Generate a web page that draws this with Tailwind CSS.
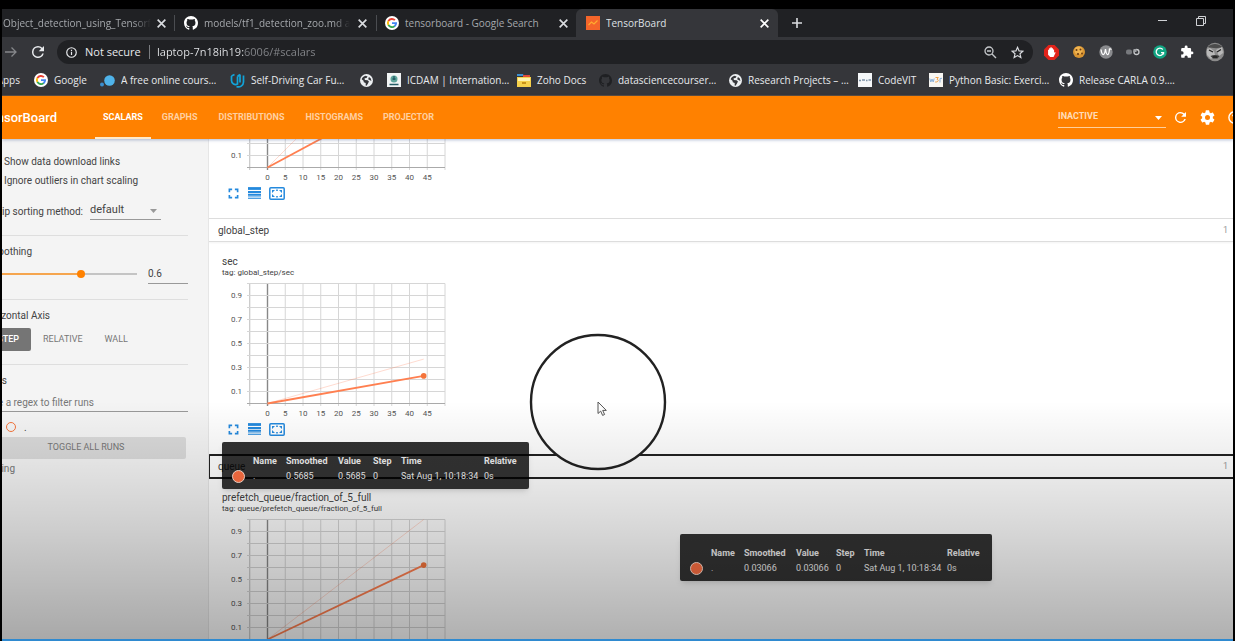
<!DOCTYPE html>
<html lang="en">
<head>
<meta charset="utf-8">
<title>TensorBoard</title>
<script src="https://cdn.jsdelivr.net/npm/@tailwindcss/browser@4"></script>
</head>
<body class="relative flex h-screen flex-col overflow-hidden border-x-2 border-t-9 border-black bg-black font-['Roboto',sans-serif] text-[10px]">

<svg class="hidden" aria-hidden="true">
  <symbol id="github" viewBox="0 0 16 16"><path fill="currentColor" d="M8 0C3.58 0 0 3.58 0 8c0 3.54 2.29 6.53 5.47 7.59.4.07.55-.17.55-.38 0-.19-.01-.82-.01-1.49-2.01.37-2.53-.49-2.69-.94-.09-.23-.48-.94-.82-1.13-.28-.15-.68-.52-.01-.53.63-.01 1.08.58 1.23.82.72 1.21 1.87.87 2.33.66.07-.52.28-.87.51-1.07-1.78-.2-3.64-.89-3.64-3.95 0-.87.31-1.59.82-2.15-.08-.2-.36-1.02.08-2.12 0 0 .67-.21 2.2.82a7.6 7.6 0 0 1 4 0c1.53-1.04 2.2-.82 2.2-.82.44 1.1.16 1.92.08 2.12.51.56.82 1.27.82 2.15 0 3.07-1.87 3.75-3.65 3.95.29.25.54.73.54 1.48 0 1.07-.01 1.93-.01 2.2 0 .21.15.46.55.38A8 8 0 0 0 16 8c0-4.42-3.58-8-8-8z"/></symbol>
  <symbol id="google" viewBox="0 0 24 24"><circle cx="12" cy="12" r="12" fill="#fff"/><g fill="none" stroke-width="3.2"><path stroke="#ea4335" d="M17 7.2A7 7 0 0 0 5.8 8.8"/><path stroke="#fbbc05" d="M5.8 8.6a7 7 0 0 0 0 6.8"/><path stroke="#34a853" d="M5.8 15.2A7 7 0 0 0 16.6 17.300"/><path stroke="#4285f4" d="M16.400 17.500A7 7 0 0 0 19 12.200H12"/></g></symbol>
  <symbol id="globe" viewBox="0 0 24 24"><circle cx="12" cy="12" r="12" fill="#eceff1"/><path fill="#35363a" d="M3 9.500C4 6 7 3.500 10.500 3L14 4.500 12 7.500 8.500 8 9 11 14 11.500 16.500 14 14.500 18 12 21.500 10.500 21 10.500 16.500 7 15 6.500 12.500zM16.500 5.500 20 8.500 21 13 18.500 11.500 15 9.500z"/></symbol>
  <symbol id="close" viewBox="0 0 10 10"><path d="M1.500 1.500 8.500 8.500M8.500 1.500 1.500 8.500" stroke="currentColor" stroke-width="1.500"/></symbol>
  <symbol id="reload" viewBox="4 4 16 16"><path fill="currentColor" d="M17.65 6.350A7.950 7.950 0 0 0 12 4a8 8 0 1 0 7.730 10h-2.080A6 6 0 1 1 12 6c1.660 0 3.140.69 4.220 1.780L13 11h7V4z"/></symbol>
  <symbol id="expand" viewBox="0 0 12 12"><path fill="none" stroke="currentColor" stroke-width="1.800" d="M1.500 4.500v-3h3M7.500 1.500h3v3M10.500 7.500v3h-3M4.500 10.500h-3v-3"/></symbol>
  <symbol id="lines" viewBox="0 0 13 12"><path stroke="currentColor" stroke-width="2.800" d="M0 1.500h13"/><path stroke="currentColor" stroke-width="2" d="M0 4.900h13M0 7.800h13"/><path stroke="currentColor" stroke-width="1" d="M0 9.900h13M0 11.500h13" opacity=".8"/></symbol>
  <symbol id="fit" viewBox="0 0 16 13"><rect x=".8" y=".8" width="14.400" height="11.400" rx="1" fill="none" stroke="currentColor" stroke-width="1.500"/><path fill="currentColor" d="M3 3h3L3 6zM13 3v3l-3-3zM3 10V7l3 3zM13 10h-3l3-3zM7.200 2.500h1.600v1.500H7.200zM7.200 9h1.600v1.500H7.200z"/></symbol>
</svg>

<div class="flex min-h-0 flex-1 flex-col overflow-hidden bg-white">

<header class="shrink-0 bg-[#35363a] font-['Open_Sans',sans-serif] text-[10px] text-[#e8eaed]">
  <nav class="flex h-7 items-center bg-[#202124] text-[#a5a8ac]" aria-label="Tabs">
    <div class="flex h-4 w-[173px] shrink-0 items-center border-r border-[#4b4d51] pl-px">
      <span class="w-[148px] overflow-hidden whitespace-nowrap [mask-image:linear-gradient(to_right,black_130px,transparent)]">Object_detection_using_Tensorflow</span>
      <button class="ml-[5px] text-[#dadce0]" aria-label="Close tab"><svg class="size-[11px]"><use href="#close"/></svg></button>
    </div>
    <div class="flex h-4 w-[202px] shrink-0 items-center border-r border-[#4b4d51] pl-[9px]">
      <svg class="mr-1.5 size-[14px] shrink-0 text-white"><use href="#github"/></svg>
      <span class="w-[146px] overflow-hidden whitespace-nowrap [mask-image:linear-gradient(to_right,black_130px,transparent)]">models/tf1_detection_zoo.md at master</span>
      <button class="ml-[7px] text-[#dadce0]" aria-label="Close tab"><svg class="size-[11px]"><use href="#close"/></svg></button>
    </div>
    <div class="flex h-4 w-[199px] shrink-0 items-center pl-2">
      <svg class="mr-1.5 size-[14px] shrink-0"><use href="#google"/></svg>
      <span class="w-[146px] overflow-hidden whitespace-nowrap">tensorboard - Google Search</span>
      <button class="ml-[7px] text-[#dadce0]" aria-label="Close tab"><svg class="size-[11px]"><use href="#close"/></svg></button>
    </div>
    <div class="flex h-full w-[202px] shrink-0 items-center rounded-t-md bg-[#35363a] pl-[10px] text-[#dfe1e5]">
      <svg class="mr-[6px] size-[14px] shrink-0" viewBox="0 0 14 14"><path fill="#f4652a" d="M0 0h14v14H0z"/><path d="m2.500 9 3-3 2.500 2L11.500 4.500" fill="none" stroke="#ffab2e" stroke-width="1.200"/></svg>
      <span class="w-[146px] overflow-hidden whitespace-nowrap">TensorBoard</span>
      <button class="ml-[7px] text-white" aria-label="Close tab"><svg class="size-[11px]"><use href="#close"/></svg></button>
    </div>
    <button class="ml-[13px]" aria-label="New tab"><svg class="size-3" viewBox="0 0 12 12"><path d="M6 1v10M1 6h10" stroke="#dadce0" stroke-width="1.600"/></svg></button>
    <button class="mr-[28px] mb-1 ml-auto" aria-label="Minimize"><svg class="size-[10px]" viewBox="0 0 10 10"><path d="M0 4.500h9" stroke="#d0d2d5"/></svg></button>
    <button class="mr-[27px] mb-1" aria-label="Restore"><svg class="size-[10px]" viewBox="0 0 10 10"><path d="M.5 2.500h7v7h-7zM2.500 2.500v-2h7v7h-2" fill="none" stroke="#d0d2d5"/></svg></button>
  </nav>

  <div class="flex h-[30px] items-center">
    <button class="ml-[3px] text-[#85878a]" aria-label="Forward"><svg class="size-3" viewBox="0 0 12 12"><path d="M0 6h11M6.500 1.500 11 6l-4.500 4.500" fill="none" stroke="currentColor" stroke-width="1.300"/></svg></button>
    <button class="ml-[15px]" aria-label="Reload"><svg class="size-3"><use href="#reload"/></svg></button>
    <div class="mr-[11px] ml-[13px] flex h-6 flex-1 items-center rounded-full bg-[#202124] px-[9px] text-[11px]">
      <svg class="size-[11px]" viewBox="0 0 12 12"><circle cx="6" cy="6" r="5.200" fill="none" stroke="currentColor" stroke-width="1.300"/><path d="M6 5.200v3.500M6 3v1.300" stroke="currentColor" stroke-width="1.300"/></svg>
      <span class="ml-2 w-[64px] whitespace-nowrap">Not secure</span>
      <span class="h-3.5 w-px bg-[#7a7c80]"></span>
      <input class="ml-[7px] min-w-0 flex-1 bg-linear-to-r from-[#e8eaed] from-[87px] to-[#85878b] to-[87px] bg-clip-text text-transparent outline-none" aria-label="Address" value="laptop-7n18ih19:6006/#scalars">
      <button aria-label="Zoom"><svg class="size-[13px]" viewBox="0 0 13 13"><circle cx="5" cy="5" r="4" fill="none" stroke="#c4c7ca" stroke-width="1.300"/><path d="M3 5h4M8 8l4 4" stroke="#c4c7ca" stroke-width="1.400"/></svg></button>
      <button class="ml-[14px]" aria-label="Bookmark"><svg class="size-[13px]" viewBox="0 0 24 24"><path d="m12 2.500 2.900 6.500 7 .7-5.300 4.700 1.600 7L12 17.700l-6.200 3.700 1.600-7L2.100 9.700l7-.7z" fill="none" stroke="#dadce0" stroke-width="2.200"/></svg></button>
    </div>
    <div class="mr-2 flex items-center gap-[13px]">
      <button aria-label="Ad blocker"><svg class="size-[15px]" viewBox="0 0 14 14"><path fill="#e2231a" d="M4.200 0h5.600L14 4.200v5.600L9.800 14H4.200L0 9.800V4.200z"/><path fill="#fff" d="M3.800 7V4.400h1V3h1.200v-.8h1.200V3h1.200v1.200h1v3l.9-.6.5.7L8.900 11.300H5.800L3.800 9z"/></svg></button>
      <button aria-label="Cookies"><svg class="size-[14px]" viewBox="0 0 14 14"><circle cx="7" cy="7" r="6" fill="#d99532"/><circle cx="6.500" cy="5.500" r="4" fill="#efb34f"/><g fill="#6d3c12"><circle cx="4.500" cy="5" r="1"/><circle cx="8.500" cy="4.500" r="1"/><circle cx="6" cy="9" r="1.100"/><circle cx="10" cy="8.500" r=".9"/></g></svg></button>
      <button aria-label="Web assistant"><svg class="size-[14px]" viewBox="0 0 14 14"><circle cx="7" cy="7" r="6.700" fill="#8a8b8e"/><path d="M2 4.500C3 11 5.500 11.500 6.500 4c1 7.500 3.500 7.500 4-.5M10.500 3.500l2 1" fill="none" stroke="#fff" stroke-width="1.300"/></svg></button>
      <button aria-label="Dark mode"><svg class="size-[14px]" viewBox="0 0 14 14"><rect x="0" y="4.500" width="6" height="5" rx="2" fill="#77797d"/><circle cx="10.500" cy="7" r="2.500" fill="none" stroke="#c8cacc" stroke-width="1.300"/><path d="M7.500 4h3v3h-3z" fill="#a0a2a5"/></svg></button>
      <button aria-label="Grammarly"><svg class="size-[14px]" viewBox="0 0 14 14"><circle cx="7" cy="7" r="6.800" fill="#11a683"/><path d="M9.800 4.500a3.700 3.700 0 1 0 .7 3.200H8M10.500 7.500v2" fill="none" stroke="#fff" stroke-width="1.300"/></svg></button>
      <button aria-label="Extensions"><svg class="size-[14px]" viewBox="0 0 24 24"><path fill="#fff" d="M20.500 11H19V7a2 2 0 0 0-2-2h-4V3.500a2.500 2.500 0 0 0-5 0V5H4a2 2 0 0 0-2 2v3.800h1.500a2.700 2.700 0 0 1 0 5.400H2V20a2 2 0 0 0 2 2h3.800v-1.500a2.700 2.700 0 0 1 5.400 0V22H17a2 2 0 0 0 2-2v-4h1.500a2.500 2.500 0 0 0 0-5z"/></svg></button>
      <button class="-ml-0.5" aria-label="Profile"><svg class="size-[20px]" viewBox="0 0 20 20"><circle cx="10" cy="10" r="9.200" fill="#8b8b8b"/><path fill="#b9b9b9" d="M2 7l3-1 4 3 1 4-4 4-4-4zM11 8l6-3 1 6-4 3z"/><path d="M3 4.500C7 1 13 1 17 4.500l-1 1-5 .8L4 5.500z" fill="#4b4b4b"/><path d="M5.500 14c3-1.500 6-1.500 9 0l-2 2.500H8z" fill="#3b3b3b"/><path d="M4 8l4 2M16 7.500 12 10M8 15h4" stroke="#222" stroke-width="1.300"/></svg></button>
    </div>
  </div>

  <nav class="flex h-[29px] items-center overflow-hidden border-b border-[#5b4a3a] pb-0.5 whitespace-nowrap" aria-label="Bookmarks">
    <a href="#" class="flex w-[18px] shrink-0 justify-end">Apps</a>
    <a href="#" class="ml-[14px] flex w-[66px] shrink-0 items-center gap-1.5"><svg class="size-[14px] shrink-0"><use href="#google"/></svg>Google</a>
    <a href="#" class="flex w-[130px] shrink-0 items-center gap-1.5 pr-2.5"><svg class="size-[15px] shrink-0" viewBox="0 0 15 15"><circle cx="9.500" cy="7.500" r="5.300" fill="#4fb3ea"/><circle cx="2" cy="11.500" r="2" fill="#3a8fd0"/></svg><span class="truncate">A free online courses list</span></a>
    <a href="#" class="flex w-[130px] shrink-0 items-center gap-1.5 pr-3"><svg class="size-[15px] shrink-0" viewBox="0 0 15 15"><path d="M1.500 3v4.500a4 4 0 0 0 6 3.500V3.500M4.500 1.500 1.500 3M7.500 3.500l2.500-2M10 1.500v8M13.500 2.500V9a5 5 0 0 1-7 4.500" fill="none" stroke="#12a4d9" stroke-width="1.700"/></svg><span class="truncate">Self-Driving Car Fundamentals</span></a>
    <a href="#" class="w-[27px] shrink-0" aria-label="Website"><svg class="size-[13px]"><use href="#globe"/></svg></a>
    <a href="#" class="flex w-[130px] shrink-0 items-center gap-1.5 pr-1.5"><svg class="size-[14px] shrink-0" viewBox="0 0 14 14"><path fill="#f2f5f5" d="M0 0h14v14H0z"/><circle cx="7" cy="6" r="3.500" fill="#5fa59b"/><path d="M5.500 6h3M7 3v4M2.500 11.500h9" stroke="#245c66" stroke-width="1.300"/></svg><span class="truncate">ICDAM | International Conference</span></a>
    <a href="#" class="flex w-[82px] shrink-0 items-center gap-1.5"><svg class="size-[14px] shrink-0" viewBox="0 0 14 14"><path fill="#3d8fd1" d="M0 1h6l1 2H0z"/><path fill="#e04b3a" d="M6 2h7v3H6z"/><path fill="#f6d14b" d="M0 4h14v10H0z"/><path fill="#fff3b0" d="M1 5h12v3H1z"/><path fill="#c99218" d="M5 9h4v2H5z"/></svg>Zoho Docs</a>
    <a href="#" class="flex w-[130px] shrink-0 items-center gap-1.5 pr-3"><svg class="size-[13px] shrink-0 text-[#1f2023]"><use href="#github"/></svg><span class="truncate">datasciencecoursera/notes</span></a>
    <a href="#" class="flex w-[129px] shrink-0 items-center gap-1.5 pr-1"><svg class="size-[13px] shrink-0"><use href="#globe"/></svg><span class="truncate">Research Projects – Home</span></a>
    <a href="#" class="flex w-[71px] shrink-0 items-center gap-1.5"><svg class="size-[14px] shrink-0" viewBox="0 0 14 14"><path fill="#f5f7f9" d="M0 0h14v14H0z"/><path d="M1 7.500h2M4 7h3M8 7.500h1.500M10.500 7H13" stroke="#7d93a8" stroke-width="1.500"/></svg>CodeVIT</a>
    <a href="#" class="flex w-[130px] shrink-0 items-center gap-1.5 pr-2"><svg class="size-[14px] shrink-0" viewBox="0 0 14 14"><path fill="#f8f6f2" d="M0 0h14v14H0z"/><path d="m.8 5.500 1 3.500 1.200-3 1.200 3 1-3.500M11 9.500v-4l2-.2" fill="none" stroke="#8bb0d8"/><path d="M6.500 4.500h2.800L8 6.300c2 .2 1.700 3-1.800 2.700" fill="none" stroke="#f0a04a"/></svg><span class="truncate">Python Basic: Exercises, Practice</span></a>
    <a href="#" class="flex w-[127px] shrink-0 items-center gap-1.5 pr-2"><svg class="size-[14px] shrink-0 text-white"><use href="#github"/></svg><span class="truncate">Release CARLA 0.9.10 notes</span></a>
  </nav>
</header>

<header class="z-10 flex h-[43px] shrink-0 items-center overflow-hidden bg-[#ff8100] font-medium text-white shadow-[0_1px_3px_rgba(60,90,150,0.4)]">
  <h1 class="flex w-[55px] shrink-0 justify-end text-[13px]">TensorBoard</h1>
  <nav class="ml-[38px] flex h-full text-[9px] font-bold text-[#ffd0a0]" aria-label="Dashboards">
    <a href="#scalars" class="flex items-center border-b-2 border-[#ffe9c9] px-2 pt-0.5 text-white">SCALARS</a>
    <a href="#graphs" class="ml-px flex items-center px-2.5">GRAPHS</a>
    <a href="#distributions" class="ml-px flex items-center px-2.5">DISTRIBUTIONS</a>
    <a href="#histograms" class="ml-px flex items-center px-2.5">HISTOGRAMS</a>
    <a href="#projector" class="flex items-center px-2.5">PROJECTOR</a>
  </nav>
  <div class="relative mr-[9px] ml-auto w-[108px]">
    <select class="block h-5 w-full appearance-none border-b border-[#ffcf9b] text-[9px] font-bold text-[#ffdcb8]" aria-label="Inactive dashboards"><option>INACTIVE</option></select>
    <svg class="pointer-events-none absolute top-2 right-1 h-1 w-[7px]" viewBox="0 0 7 4"><path fill="#fff" d="M0 0h7L3.500 4z"/></svg>
  </div>
  <button aria-label="Reload"><svg class="size-[11px]"><use href="#reload"/></svg></button>
  <button class="ml-[14px]" aria-label="Settings"><svg class="size-[15px]" viewBox="1.500 1.500 21 21"><path fill="#fff" d="M19.430 12.980c.04-.32.07-.64.07-.98s-.03-.66-.07-.98l2.110-1.650c.19-.15.24-.42.12-.64l-2-3.460c-.12-.22-.39-.3-.61-.22l-2.490 1c-.52-.4-1.080-.73-1.690-.98l-.38-2.650A.49.49 0 0 0 14 2h-4c-.25 0-.46.18-.49.42l-.38 2.650c-.61.25-1.170.59-1.690.98l-2.490-1c-.23-.09-.49 0-.61.22l-2 3.460c-.13.22-.07.49.12.64l2.110 1.650c-.04.32-.07.65-.07.98s.03.66.07.98l-2.110 1.650c-.19.15-.24.42-.12.64l2 3.460c.12.22.39.3.61.22l2.490-1c.52.4 1.080.73 1.690.98l.38 2.650c.03.24.24.42.49.42h4c.25 0 .46-.18.49-.42l.38-2.650c.61-.25 1.170-.59 1.690-.98l2.490 1c.23.09.49 0 .61-.22l2-3.460c.12-.22.07-.49-.12-.64zM12 15.500a3.500 3.500 0 1 1 0-7 3.500 3.500 0 0 1 0 7z"/></svg></button>
  <button class="-mr-[8px] ml-[13px]" aria-label="Help"><svg class="size-[13px]" viewBox="0 0 13 13"><circle cx="6.500" cy="6.500" r="5.600" fill="none" stroke="#fff" stroke-width="1.400"/><path d="M4.700 5.200a1.800 1.800 0 1 1 2.500 1.600q-.7.400-.7 1.200M6.500 9v1.200" fill="none" stroke="#fff" stroke-width="1.200"/></svg></button>
</header>

<div class="flex min-h-0 flex-1">
  <aside class="w-[207px] shrink-0 overflow-hidden border-r border-[#e6e6e6] bg-[#f4f4f4] pr-5 text-[#444]">
    <label class="mt-4 -ml-4 flex h-3 items-center gap-1.5 whitespace-nowrap"><input type="checkbox" class="size-3">Show data download links</label>
    <label class="mt-[7px] -ml-4 flex h-3 items-center gap-1.5 whitespace-nowrap"><input type="checkbox" checked class="size-3">Ignore outliers in chart scaling</label>
    <div class="mt-[14px] flex h-5 items-center">
      <label for="sort" class="flex w-[81px] shrink-0 justify-end pt-0.5 whitespace-nowrap">Tooltip sorting method:</label>
      <div class="relative ml-[7px] w-[71px]">
        <select id="sort" class="h-5 w-full appearance-none border-b border-[#999] pt-0.5 text-[11px]"><option>default</option></select>
        <svg class="pointer-events-none absolute top-[9px] right-1 h-1 w-[7px]" viewBox="0 0 7 4"><path fill="#999" d="M0 0h7L3.500 4z"/></svg>
      </div>
    </div>
    <hr class="mt-[15px] border-[#dedede]">
    <label for="smooth" class="mt-[9px] flex h-3 w-[30px] items-center justify-end">Smoothing</label>
    <div class="mt-[7px] flex h-5 items-center">
      <div class="flex w-[135px] shrink-0 justify-end">
        <input id="smooth" type="range" min="0" max="1" step="0.001" value="0.6" class="h-2 w-[137px] shrink-0 appearance-none bg-linear-to-r from-[#f5a54e] from-[59%] to-[#c4c4c4] to-[59%] bg-[length:100%_2px] bg-center bg-no-repeat [&::-webkit-slider-thumb]:size-2 [&::-webkit-slider-thumb]:appearance-none [&::-webkit-slider-thumb]:rounded-full [&::-webkit-slider-thumb]:bg-[#ff8100]">
      </div>
      <input class="ml-[11px] h-5 w-10 border-b border-[#999]" aria-label="Smoothing value" value="0.6">
    </div>
    <hr class="mt-[15px] border-[#dedede]">
    <h3 class="mt-[9px] flex h-3 w-[48px] items-center justify-end whitespace-nowrap">Horizontal Axis</h3>
    <div class="mt-[7px] flex h-[23px] items-center text-[9px] text-[#777]">
      <div class="flex w-[29px] shrink-0 justify-end"><button class="h-[23px] w-12 shrink-0 rounded-xs bg-[#757575] pr-3 text-right font-medium text-white">STEP</button></div>
      <button class="ml-3">RELATIVE</button>
      <button class="ml-[22px]">WALL</button>
    </div>
    <hr class="mt-[13px] border-[#dedede]">
    <h3 class="mt-[9px] flex h-3 w-[5px] items-center justify-end">Runs</h3>
    <div class="mt-[6px] flex justify-end"><input class="h-5 w-[208px] shrink-0 border-b border-[#999] pt-0.5 placeholder-[#777]" aria-label="Filter runs" placeholder="Write a regex to filter runs"></div>
    <label class="mt-[9px] flex h-3 items-center gap-2"><input type="radio" checked class="ml-1 size-[10px] appearance-none rounded-full border border-[#f4743b] bg-transparent"><span>.</span></label>
    <button class="mt-1 -ml-4 h-[22px] w-[200px] rounded-xs bg-[#dadada] text-[9px] text-[#777]">TOGGLE ALL RUNS</button>
    <p class="mt-[3px] flex h-3 w-[13px] items-center justify-end text-[#777]">training</p>
  </aside>

  <main class="flex min-w-0 flex-1 flex-col overflow-hidden text-[#424242]">
    <section class="flex h-[79px] shrink-0 flex-col justify-end overflow-hidden pb-[17px] pl-[13px]">
      <div data-smoothed="0.7" data-raw="1.3"></div>
      <div class="flex h-4 shrink-0 items-center gap-2 pl-[6px] text-[#2489dd]"><button aria-label="Expand"><svg class="size-[11px]"><use href="#expand"/></svg></button><button class="ml-px" aria-label="Toggle y axis"><svg class="h-[12px] w-[13px]"><use href="#lines"/></svg></button><button aria-label="Fit domain"><svg class="h-[13px] w-4"><use href="#fit"/></svg></button></div>
    </section>
    <section class="shrink-0">
      <h2 class="flex h-6 items-center justify-between border-y border-[#ddd] pt-px pr-[5px] pl-[9px] text-[10px] shadow-xs">global_step<span class="text-[9px] text-[#999]">1</span></h2>
      <div class="pt-[14px] pb-[17px] pl-[13px]">
        <h3 class="leading-3">sec</h3>
        <p class="text-[8px] leading-[10px]">tag: global_step/sec</p>
        <div data-smoothed="0.23" data-raw="0.37"></div>
        <div class="flex h-4 items-center gap-2 pl-[6px] text-[#2489dd]"><button aria-label="Expand"><svg class="size-[11px]"><use href="#expand"/></svg></button><button class="ml-px" aria-label="Toggle y axis"><svg class="h-[12px] w-[13px]"><use href="#lines"/></svg></button><button aria-label="Fit domain"><svg class="h-[13px] w-4"><use href="#fit"/></svg></button></div>
      </div>
    </section>
    <section class="shrink-0">
      <h2 class="-mr-1 -ml-px flex h-[25px] items-center justify-between rounded-xs border-2 border-[#222] pr-[7px] pl-2 text-[10px]">queue<span class="text-[9px] text-[#999]">1</span></h2>
      <div class="pt-[13px] pl-[13px]">
        <h3 class="leading-3">prefetch_queue/fraction_of_5_full</h3>
        <p class="text-[8px] leading-[10px]">tag: queue/prefetch_queue/fraction_of_5_full</p>
        <div data-smoothed="0.62" data-raw="1"></div>
      </div>
    </section>
  </main>
</div>
</div>

<svg class="absolute top-[324px] left-[527px] z-10 size-[138px]" viewBox="0 0 138 138" aria-hidden="true"><circle cx="69" cy="69" r="67" fill="#fff" stroke="#222" stroke-width="2.400"/><path d="M69 69v11.500l2.700-2.400 1.900 4.300 2-.9-1.900-4.100h3.600z" fill="#fff" stroke="#555" stroke-width="1"/></svg>

<div role="tooltip" class="absolute top-[433px] left-[220px] z-20 rounded-xs bg-black/80 pt-3 pb-[5px] text-[9px] text-[#eee] shadow-md">
  <table class="w-[307px] table-fixed text-left">
    <colgroup><col class="w-[31px]"><col class="w-[33px]"><col class="w-[52px]"><col class="w-[35px]"><col class="w-[28px]"><col class="w-[83px]"><col></colgroup>
    <thead><tr class="h-[15px]"><td></td><th>Name</th><th>Smoothed</th><th>Value</th><th>Step</th><th>Time</th><th>Relative</th></tr></thead>
    <tbody><tr class="h-[15px]"><td><span class="ml-[10px] block size-[13px] rounded-full border border-[#ffe3d6] bg-[#ff7043]"></span></td><td>.</td><td>0.5685</td><td>0.5685</td><td>0</td><td class="whitespace-nowrap">Sat Aug 1, 10:18:34</td><td>0s</td></tr></tbody>
  </table>
</div>
<div role="tooltip" class="absolute top-[525px] left-[678px] z-20 rounded-xs bg-black/80 pt-3 pb-[5px] text-[9px] text-[#eee] shadow-md">
  <table class="w-[312px] table-fixed text-left">
    <colgroup><col class="w-[31px]"><col class="w-[33px]"><col class="w-[52px]"><col class="w-[40px]"><col class="w-[28px]"><col class="w-[83px]"><col></colgroup>
    <thead><tr class="h-[15px]"><td></td><th>Name</th><th>Smoothed</th><th>Value</th><th>Step</th><th>Time</th><th>Relative</th></tr></thead>
    <tbody><tr class="h-[15px]"><td><span class="ml-[10px] block size-[13px] rounded-full border border-[#ffe3d6] bg-[#ff7043]"></span></td><td>.</td><td>0.03066</td><td>0.03066</td><td>0</td><td class="whitespace-nowrap">Sat Aug 1, 10:18:34</td><td>0s</td></tr></tbody>
  </table>
</div>

<div class="pointer-events-none absolute inset-x-0 bottom-0 z-30 h-[240px] border-b-2 border-[#2f8ad0] bg-[linear-gradient(to_bottom,rgb(0_0_0/0),rgb(0_0_0/0.09)_32%,rgb(0_0_0/0.16)_55%,rgb(0_0_0/0.31))]"></div>

<script>
// Draws a scalar chart: x runs from -5 to 50, y from 0 to 1.
const x = step => 45.5 + step * 3.55;
const y = value => 125.5 - value * 120;
document.querySelectorAll('[data-smoothed]').forEach(el => {
  let grid = '', labels = '';
  for (let s = -5; s <= 50; s += 5) {
    grid += `<path d="M${x(s)} 5.5V128" stroke="${s === 0 ? '#888' : s === -5 ? '#bbb' : '#d6d6d6'}" stroke-width="${s === 0 ? 1.4 : 1}"/>`;
    if (s >= 0 && s < 50) labels += `<text x="${x(s)}" y="138" text-anchor="middle">${s}</text>`;
  }
  for (let n = 0; n <= 10; n++) {
    grid += `<path d="M25 ${y(n / 10)}H223" stroke="${n ? '#d6d6d6' : '#aaa'}"/>`;
    if (n % 2) labels += `<text x="20" y="${y(n / 10) + 2}" text-anchor="end">0.${n}</text>`;
  }
  const line = (v, attrs) => `<path d="M${x(0)} ${y(0)}L${x(44)} ${y(v)}" fill="none" ${attrs}/>`;
  el.innerHTML = `<svg class="block h-[143px] w-[230px] text-[8px]" viewBox="0 0 230 143" fill="#555" role="img" aria-label="Scalar chart">
    ${grid}${line(+el.dataset.raw, 'stroke="#ff7043" stroke-opacity=".25"')}${line(+el.dataset.smoothed, 'stroke="#ff7f50" stroke-width="1.8"')}
    <circle cx="${x(44)}" cy="${y(+el.dataset.smoothed)}" r="2.8" fill="#f4743b"/>${labels}</svg>`;
});
</script>
</body>
</html>
